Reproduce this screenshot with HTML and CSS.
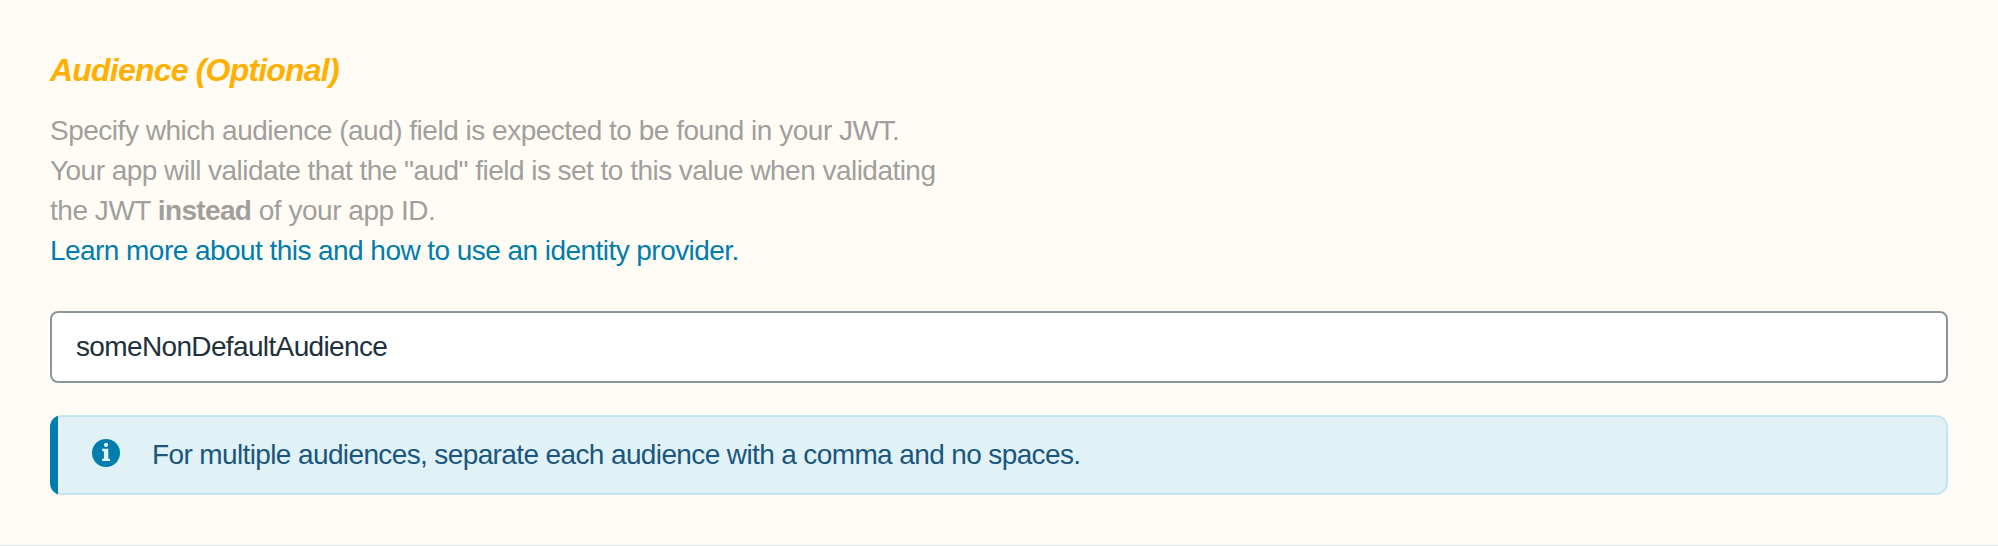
FILE: index.html
```html
<!DOCTYPE html>
<html lang="en">
<head>
<meta charset="utf-8">
<title>Audience</title>
<link rel="stylesheet" href="styles.css">
</head>
<body>
<section class="setting">
  <h2 class="title">Audience (Optional)</h2>
  <p class="description">
    <span class="line line-a">Specify which audience (aud) field is expected to be found in your JWT.</span>
    <span class="line line-b">Your app will validate that the "aud" field is set to this value when validating</span>
    <span class="line line-c">the JWT <strong class="strong">instead</strong> of your app ID.</span>
    <a class="line link">Learn more about this and how to use an identity provider.</a>
  </p>
  <input class="field" type="text" value="someNonDefaultAudience" aria-label="Audience">
  <div class="banner">
    <svg class="icon" viewBox="0 0 28 28" aria-hidden="true">
      <circle class="icon-disc" cx="14" cy="14" r="14"/>
      <circle class="icon-mark" cx="14" cy="5.9" r="2.1"/>
      <path class="icon-mark" d="M10.1 9.8h6.2v9.9h1.7v2.4h-7.9v-2.4h1.8v-7.4h-1.8z"/>
    </svg>
    <span class="message">For multiple audiences, separate each audience with a comma and no spaces.</span>
  </div>
</section>
</body>
</html>
```

FILE: styles.css
```css
* { box-sizing: border-box; }

body {
  margin: 0;
  background: #fffcf5;
  font-family: "Liberation Sans", Arial, sans-serif;
  font-size: 28px;
}

.setting {
  height: 546px;
  padding: 50px 50px 0;
  border-bottom: 1px solid #e7eaeb;
}

.title {
  margin: 0;
  color: #ffb000;
  font-size: 32px;
  font-style: italic;
  font-weight: 700;
  letter-spacing: -0.8px;
  line-height: 40px;
}

.description {
  margin: 21px 0 0;
  color: #a09f9d;
  line-height: 40px;
}

.line {
  display: block;
  white-space: nowrap;
}

.line-a { letter-spacing: -0.49px; }
.line-b { letter-spacing: -0.53px; }
.line-c { letter-spacing: -0.46px; }
.strong { letter-spacing: -0.65px; }

.link {
  color: #007cad;
  letter-spacing: -0.55px;
}

.field {
  display: block;
  width: 100%;
  height: 72px;
  margin-top: 40px;
  padding: 0 24px;
  border: 2px solid #89979b;
  border-radius: 8px;
  background: #fff;
  color: #21313c;
  font: inherit;
  letter-spacing: -0.64px;
}

.banner {
  position: relative;
  display: flex;
  align-items: center;
  height: 80px;
  margin-top: 32px;
  padding-left: 40px;
  border: 2px solid #c5e4f2;
  border-left: 0;
  border-radius: 12px;
  background: #e1f2f6;
  color: #1a567e;
}

.banner::before {
  content: "";
  position: absolute;
  inset: -2px -2px -2px 0;
  border-radius: 12px;
  background: linear-gradient(to right, #007cad 8px, transparent 8px);
}

.icon {
  width: 28px;
  height: 28px;
  margin: 0 32px 4px 2px;
}

.message { letter-spacing: -0.62px; }

.icon-disc { fill: #007cad; }
.icon-mark { fill: #e1f2f6; }
```
